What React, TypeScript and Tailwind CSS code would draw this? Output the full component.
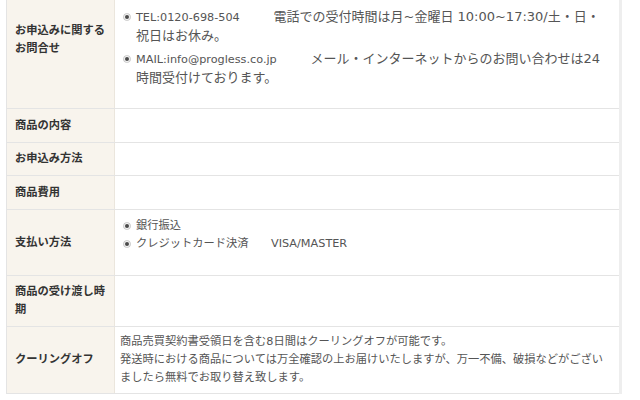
import React from "react";

// 丸いビュレット（◉）
function Bullet() {
  return (
    <svg width="8" height="8" viewBox="0 0 8 8" className="shrink-0">
      <circle cx="4" cy="4" r="3.8" fill="#c4c4c4" />
      <circle cx="4" cy="4" r="2.9" fill="#f4f4f4" />
      <circle cx="4" cy="4" r="2" fill="#4a4a4a" />
    </svg>
  );
}

function Item({ lines, className = "" }: { lines: React.ReactNode[]; className?: string }) {
  return (
    <li className={`flex ${className}`}>
      <span className="flex w-[16px] h-[18px] items-center pl-[3px]">
        <Bullet />
      </span>
      <span className="flex flex-col">
        {lines.map((l, i) => (
          <span key={i} className="whitespace-nowrap">
            {l}
          </span>
        ))}
      </span>
    </li>
  );
}

interface RowProps {
  label: React.ReactNode;
  height: string;
  top?: boolean;
  children?: React.ReactNode;
}

function Row({ label, height, top, children }: RowProps) {
  return (
    <div className={`flex border-b border-[#e4e4e4] ${height}`}>
      <div className="flex w-[108px] shrink-0 items-center border-r border-[#ebe6dd] bg-[#f8f4ed] px-2 font-bold text-[#333]">
        <div>{label}</div>
      </div>
      <div
        className={`flex flex-1 pl-[5px] pr-2 text-[#555] ${top ? "items-start" : "items-center"}`}
      >
        {children}
      </div>
    </div>
  );
}

const GAP = "\u3000\u3000\u3000";

export default function App() {
  return (
    <div
      className="h-[400px] w-[640px] overflow-hidden bg-white text-[11.25px] leading-[18px]"
      style={{ fontFamily: '"DejaVu Sans", "Noto Sans CJK JP", sans-serif' }}
    >
      <div className="ml-[6px] mt-[-29px] w-[616px] border-l border-r-[3px] border-l-[#e4e4e4] border-r-[#eeeeee]">
        {/* お問合せ */}
        <Row label={<>お申込みに関する<br />お問合せ</>} height="h-[138px]" top>
          <ul className="pt-[37px]">
            <Item
              lines={[
                <>
                  {"TEL:0120-698-504" + GAP}
                  <span className="text-[13px]">電話での受付時間は月~金曜日 10:00~17:30/土・日・</span>
                </>,
                <span className="text-[13px]">祝日はお休み。</span>,
              ]}
            />
            <Item
              className="mt-[4px]"
              lines={[
                <>
                  {"MAIL:info@progless.co.jp" + GAP}
                  <span className="text-[13px]">メール・インターネットからのお問い合わせは24</span>
                </>,
                <span className="text-[13px]">時間受付けております。</span>,
              ]}
            />
          </ul>
        </Row>

        <Row label="商品の内容" height="h-[34px]" />
        <Row label="お申込み方法" height="h-[33px]" />
        <Row label="商品費用" height="h-[34px]" />

        {/* 支払い方法 */}
        <Row label="支払い方法" height="h-[66px]" top>
          <ul className="pt-[7px]">
            <Item lines={["銀行振込"]} />
            <Item lines={["クレジットカード決済\u3000\u3000VISA/MASTER"]} />
          </ul>
        </Row>

        <Row label="商品の受け渡し時期" height="h-[51px]" />

        {/* クーリングオフ */}
        <Row label="クーリングオフ" height="h-[67px]">
          <p>
            商品売買契約書受領日を含む8日間はクーリングオフが可能です。
            <br />
            発送時における商品については万全確認の上お届けいたしますが、万一不備、破損などがござい
            <br />
            ましたら無料でお取り替え致します。
          </p>
        </Row>
      </div>
    </div>
  );
}
